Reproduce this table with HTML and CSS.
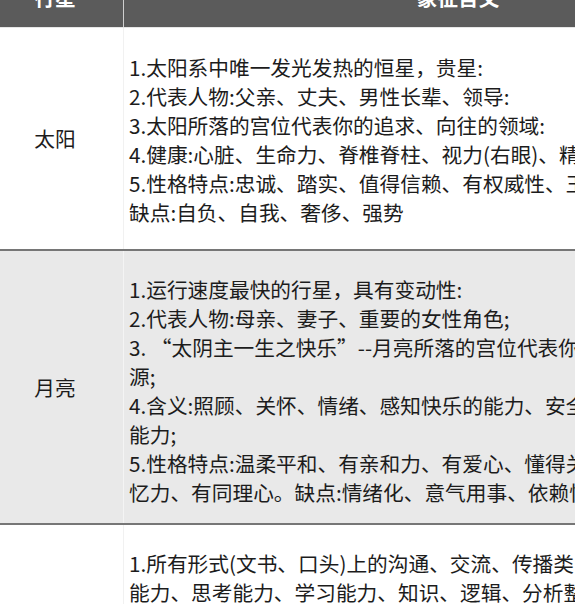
FILE: index.html
```html
<!DOCTYPE html>
<html lang="zh-CN">
<head>
<meta charset="utf-8">
<title>行星象征含义</title>
<link rel="stylesheet" href="styles.css">
</head>
<body>
<div class="viewport">
  <table class="planets">
    <thead>
      <tr>
        <th class="col-name">行星</th>
        <th class="col-desc">象征含义</th>
      </tr>
    </thead>
    <tbody>
      <tr class="row row-sun">
        <td class="name">太阳</td>
        <td class="desc">1.太阳系中唯一发光发热的恒星，贵星:<br>2.代表人物:父亲、丈夫、男性长辈、领导:<br>3.太阳所落的宫位代表你的追求、向往的领域:<br>4.健康:心脏、生命力、脊椎脊柱、视力(右眼)、精力;<br>5.性格特点:忠诚、踏实、值得信赖、有权威性、王者风范、自信、慷慨。<br>缺点:自负、自我、奢侈、强势</td>
      </tr>
      <tr class="row row-moon alt">
        <td class="name">月亮</td>
        <td class="desc">1.运行速度最快的行星，具有变动性:<br>2.代表人物:母亲、妻子、重要的女性角色;<br>3. “太阴主一生之快乐”--月亮所落的宫位代表你的快乐来<br>源;<br>4.含义:照顾、关怀、情绪、感知快乐的能力、安全感、适应环境的<br>能力;<br>5.性格特点:温柔平和、有亲和力、有爱心、懂得关心他人、有很好的记<br>忆力、有同理心。缺点:情绪化、意气用事、依赖性强。</td>
      </tr>
      <tr class="row row-mercury">
        <td class="name">水星</td>
        <td class="desc">1.所有形式(文书、口头)上的沟通、交流、传播类的事物，表达<br>能力、思考能力、学习能力、知识、逻辑、分析整理能力;<br>2.代表人物:兄弟姐妹、同学、邻居、中介;<br>3.水星所落的宫位代表你的思维方式与沟通领域;<br>4.性格特点:聪明、机智、灵活、好奇心强。</td>
      </tr>
    </tbody>
  </table>
</div>
</body>
</html>
```

FILE: styles.css
```css
html, body {
  margin: 0;
  padding: 0;
  background: #ffffff;
}

body {
  font-family: "Noto Sans CJK SC", "Microsoft YaHei", "Noto Sans", sans-serif;
  color: #1c1c1c;
  overflow: hidden;
}

.viewport {
  width: 575px;
  height: 604px;
  overflow: hidden;
}

.planets {
  border-collapse: collapse;
  width: 804px;
  margin-top: -33px;
  margin-left: -13px;
  table-layout: fixed;
  font-size: 20.7px;
  line-height: 29px;
}

.planets th {
  background: #5b5b5b;
  color: #ffffff;
  font-weight: 700;
  height: 60px;
  padding: 0;
  text-align: center;
  vertical-align: middle;
  border-bottom: 1px solid #e6e6e6;
}

.col-name {
  width: 136px;
  border-right: 1px solid #cfcfcf;
}

.col-desc {
  width: 668px;
}

.row + .row td {
  border-top: 2px solid #767676;
}

.alt td {
  background: #e9e9e9;
}

.name {
  text-align: center;
  vertical-align: middle;
  padding: 0;
  border-right: 1px solid #f1f1f1;
}

.alt .name {
  border-right-color: #f4f4f4;
}

.desc {
  vertical-align: top;
  white-space: nowrap;
  padding: 24px 0 22px 5px;
}

.row-sun .desc {
  padding-top: 25px;
}

.row-moon .desc {
  padding-bottom: 16px;
}
```
